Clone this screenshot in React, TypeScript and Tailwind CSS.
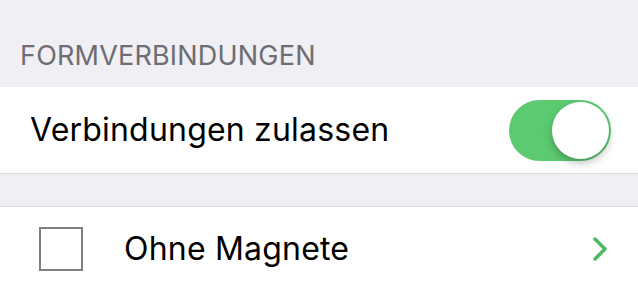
export default function App() {
  return (
    <div className="h-[295px] w-[638px] overflow-hidden bg-[#efeff4] font-['Inter',sans-serif]">
      {/* Section header */}
      <div className="flex h-[87px] items-end px-[20px] pb-[18px]">
        <span className="text-[27px] leading-none tracking-[0.2px] text-[#6d6d72]">FORMVERBINDUNGEN</span>
      </div>

      {/* Toggle row */}
      <div className="flex h-[87px] items-center justify-between border-b border-[#dcdce0] bg-white pl-[30px] pr-[27px]">
        <span className="text-[32px] tracking-[0.2px] text-black">Verbindungen zulassen</span>
        <div className="relative h-[61px] w-[102px] rounded-full bg-[#5cca71]">
          <div className="absolute right-[2px] top-[2px] h-[57px] w-[57px] rounded-full bg-white shadow-[0_4px_8px_rgba(0,0,0,0.25)]" />
        </div>
      </div>

      <div className="h-[33px] border-b border-[#dcdce0]" />

      {/* Checkbox row */}
      <div className="flex h-[100px] items-start bg-white pl-[39px] pr-[30px] pt-[20px]">
        <div className="h-[44px] w-[44px] border-2 border-[#808080]" />
        <span className="ml-[41px] mt-[1px] flex-1 text-[32px] leading-[42px] tracking-[0.2px] text-black">Ohne Magnete</span>
        <svg width="16" height="26" viewBox="0 0 16 26" className="mt-[9px]">
          <path d="M3 3 L13 13 L3 23" fill="none" stroke="#4fb862" strokeWidth="3.5" strokeLinecap="round" strokeLinejoin="round" />
        </svg>
      </div>
    </div>
  );
}
